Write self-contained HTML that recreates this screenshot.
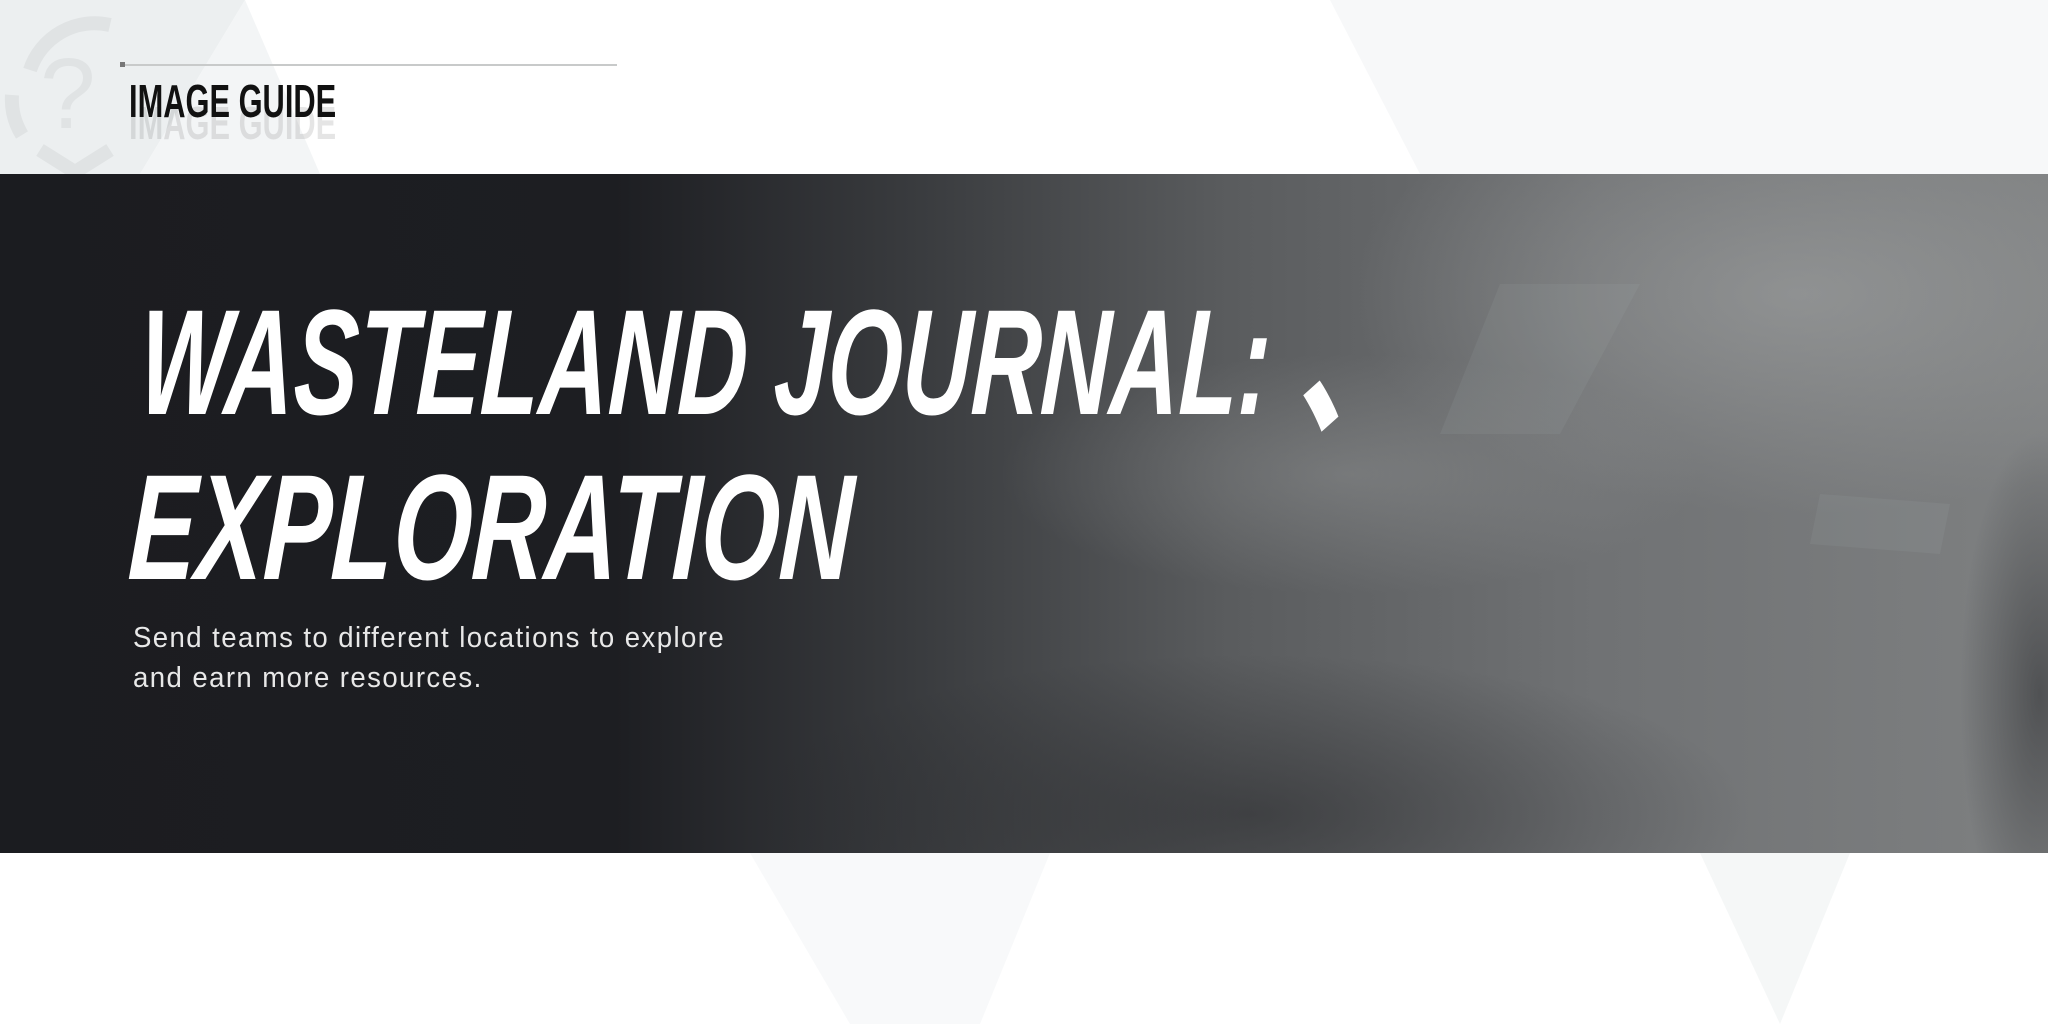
<!DOCTYPE html>
<html><head><meta charset="utf-8"><style>
html,body{margin:0;padding:0}
body{width:2048px;height:1024px;position:relative;overflow:hidden;background:#fff;font-family:"Liberation Sans Narrow","Liberation Sans",sans-serif}
.abs{position:absolute}
#band{left:0;top:174px;width:2048px;height:679px;overflow:hidden;
background:linear-gradient(90deg,#1b1c20 0%,#1d1e22 30%,#3a3c3f 45%,#5a5c5e 60%,#707274 78%,#7e8081 100%)}
.t{color:#fff;font-weight:bold;font-style:italic;white-space:nowrap;transform-origin:0 0;line-height:1}
</style></head><body>
<svg class="abs" style="left:0;top:0" width="2048" height="174">
<polygon points="0,0 245,0 140,174 0,174" fill="#eceff0"/>
<polygon points="140,174 245,0 320,174" fill="#f3f5f6"/>
<polygon points="1330,0 2048,0 2048,174 1420,174" fill="#f7f8f9"/>
<g fill="none" stroke="#e0e3e4" stroke-width="14">
<path d="M30,70 A68,68 0 0 1 110,25"/><path d="M22,135 A68,68 0 0 1 12,95"/><path d="M110,150 L75,172 L40,150"/>
</g>
<text x="40" y="128" font-family="Liberation Sans" font-size="100" fill="#e0e3e4">?</text>
<line x1="121" y1="65" x2="617" y2="65" stroke="#c8caca" stroke-width="2"/>
<rect x="120" y="62" width="5" height="5" fill="#777"/>
</svg>
<div class="abs" style="left:129px;top:100px;font-weight:bold;font-size:46px;color:#111;opacity:.1;transform:scaleX(0.67);transform-origin:0 0;line-height:1">IMAGE GUIDE</div>
<div class="abs" style="left:129px;top:78px;font-weight:bold;font-size:46px;color:#111;transform:scaleX(0.67);transform-origin:0 0;line-height:1">IMAGE GUIDE</div>
<div id="band" class="abs">
<svg class="abs" style="left:0;top:0" width="2048" height="679">
<defs>
<radialGradient id="g1" cx="0.5" cy="0.5" r="0.5"><stop offset="0" stop-color="#a4a6a6" stop-opacity=".55"/><stop offset="1" stop-color="#a4a6a6" stop-opacity="0"/></radialGradient>
<radialGradient id="g2" cx="0.5" cy="0.5" r="0.5"><stop offset="0" stop-color="#222326" stop-opacity=".5"/><stop offset="1" stop-color="#222326" stop-opacity="0"/></radialGradient>
</defs>
<ellipse cx="1800" cy="120" rx="450" ry="220" fill="url(#g1)"/>
<ellipse cx="1350" cy="300" rx="350" ry="120" fill="url(#g1)" opacity=".6"/>
<ellipse cx="1250" cy="640" rx="500" ry="160" fill="url(#g2)"/>
<ellipse cx="2040" cy="520" rx="80" ry="260" fill="url(#g2)"/>
<g fill="#b4b6b6" opacity=".1">
<polygon points="1500,110 1640,110 1560,260 1440,260"/>
<polygon points="1820,320 1950,330 1940,380 1810,370"/>
</g>
</svg>
</div>
<div class="abs t" style="left:144px;top:275px;font-size:150px;transform:scaleX(0.64) skewX(-4deg)">WASTELAND JOURNAL:<span style="font-family:'Noto Sans CJK SC',sans-serif;margin-left:60px;display:inline-block;transform:scale(1.3,1.1)">、</span></div>
<div class="abs t" style="left:133px;top:452px;font-size:150px;transform:scaleX(0.675) skewX(-4deg)">EXPLORATION</div>
<div class="abs" style="left:133px;top:618px;color:#e8e8e8;font-size:29px;line-height:40px;letter-spacing:1.5px;transform:scaleX(0.95);transform-origin:0 0;white-space:nowrap">Send teams to different locations to explore<br>and earn more resources.</div>
<svg class="abs" style="left:0;top:853px" width="2048" height="171">
<polygon points="750,0 1050,0 980,171 850,171" fill="#f8f9fa"/>
<polygon points="1700,0 1850,0 1780,171" fill="#f5f7f7"/>
</svg>
</body></html>
